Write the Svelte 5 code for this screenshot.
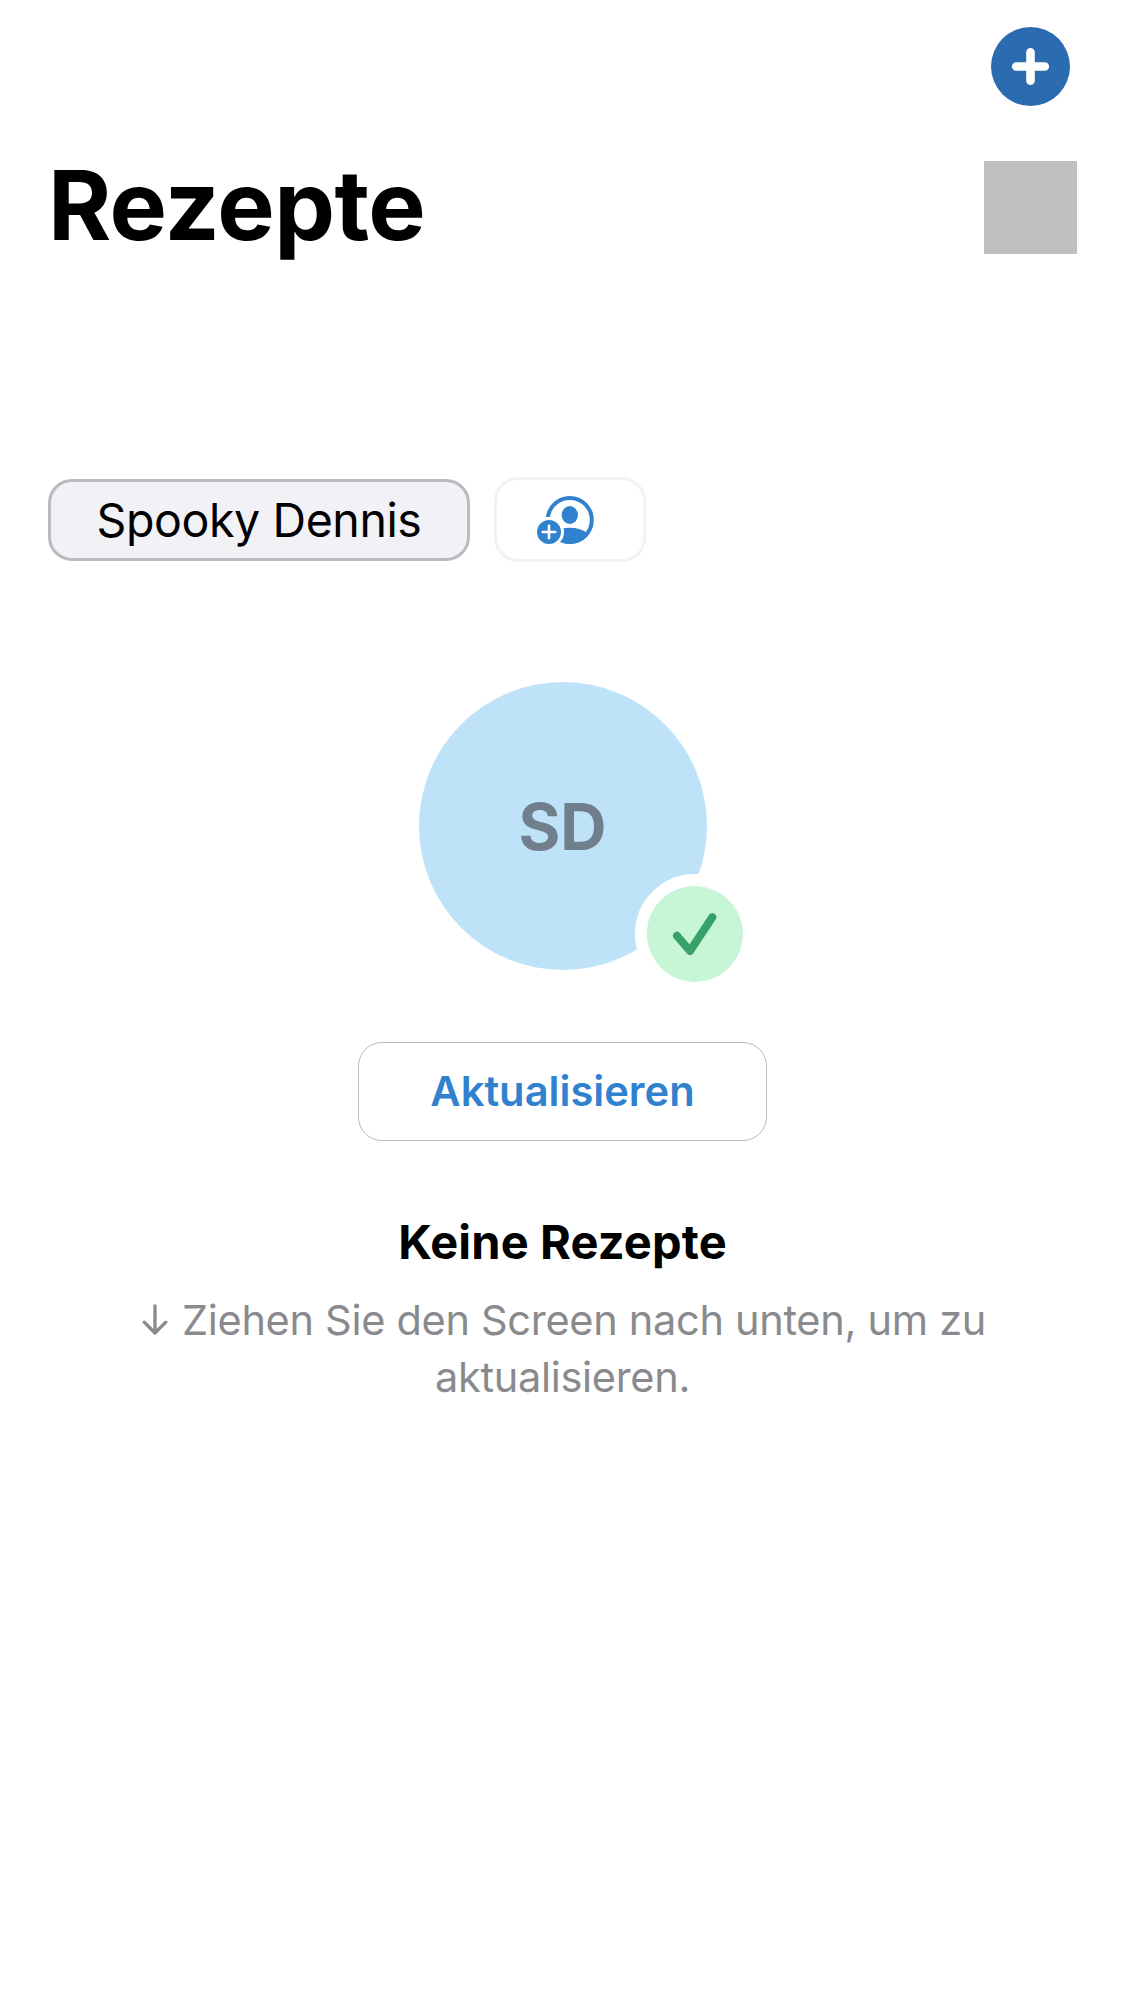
<script>
  const title = 'Rezepte';
  const person = { name: 'Spooky Dennis', initials: 'SD' };
</script>

<main class="screen">
  <header>
    <div class="toolbar">
      <button class="add" aria-label="Rezept hinzufügen">
        <svg viewBox="0 0 79 79" width="79" height="79">
          <path d="M39.5 25.2v28.6M25.2 39.5h28.6" stroke="#fff" stroke-width="8.6" stroke-linecap="round" />
        </svg>
      </button>
    </div>
    <div class="title-row">
      <h1>{title}</h1>
      <div class="placeholder"></div>
    </div>
  </header>

  <nav class="people">
    <button class="chip selected">{person.name}</button>
    <button class="chip invite" aria-label="Person hinzufügen">
      <svg viewBox="0 0 58 50" width="58" height="50">
        <defs>
          <mask id="badge-gap">
            <rect width="58" height="50" fill="#fff" />
            <circle cx="13" cy="37" r="15" fill="#000" />
            <path d="M6 22h7v4h-7z" fill="#000" />
          </mask>
          <clipPath id="ring-clip"><circle cx="33.8" cy="25" r="24" /></clipPath>
        </defs>
        <g mask="url(#badge-gap)">
          <circle cx="33.8" cy="25" r="22" fill="none" stroke="#3182ce" stroke-width="4" />
          <ellipse cx="33.8" cy="20" rx="8.2" ry="9" fill="#3182ce" />
          <ellipse cx="33.8" cy="49.7" rx="24" ry="17" fill="#3182ce" clip-path="url(#ring-clip)" />
        </g>
        <circle cx="13" cy="37" r="12" fill="#3182ce" />
        <path d="M13 30.7v12.6M6.7 37h12.6" stroke="#fff" stroke-width="2.6" stroke-linecap="round" />
      </svg>
    </button>
  </nav>

  <section class="empty">
    <div class="avatar">
      <span>{person.initials}</span>
      <div class="status">
        <svg viewBox="0 0 96 96" width="96" height="96">
          <path d="M30 49.8L43 65L65.3 31.2" fill="none" stroke="#38a169" stroke-width="8" stroke-linecap="round" stroke-linejoin="round" />
        </svg>
      </div>
    </div>
    <button class="refresh">Aktualisieren</button>
    <h2>Keine Rezepte</h2>
    <p>
      <svg class="arrow" viewBox="0 0 26 31" width="26" height="31"><path d="M13 2v27M2.2 18.2L13 29L23.8 18.2" fill="none" stroke="#8a8a8e" stroke-width="3.3" stroke-linecap="round" stroke-linejoin="round" /></svg>Ziehen Sie den Screen nach unten, um zu aktualisieren.
    </p>
  </section>
</main>

<style>
  :global(body) {
    margin: 0;
    background: #fff;
  }
  .screen {
    box-sizing: border-box;
    min-height: 2001px;
    padding: 27px 48px 0;
    font-family: Inter, 'Liberation Sans', sans-serif;
    color: #000;
  }
  button {
    box-sizing: border-box;
    margin: 0;
    font: inherit;
  }
  svg {
    display: block;
  }
  .toolbar {
    display: flex;
    justify-content: flex-end;
    padding-right: 7px;
  }
  .add {
    width: 79px;
    height: 79px;
    padding: 0;
    border: 0;
    border-radius: 50%;
    background: #2b6cb0;
  }
  .title-row {
    display: flex;
    justify-content: space-between;
    align-items: flex-start;
    margin-top: 55px;
  }
  h1 {
    margin: 0;
    font-size: 96.5px;
    font-weight: 700;
    line-height: 88px;
    letter-spacing: -0.6px;
  }
  .placeholder {
    width: 93px;
    height: 93px;
    background: #bfbfbf;
  }
  .people {
    display: flex;
    align-items: center;
    gap: 24px;
    margin-top: 223px;
  }
  .chip {
    display: flex;
    align-items: center;
    justify-content: center;
    border: 3px solid #f2f1f6;
    border-radius: 24px;
    background: #fff;
    color: #000;
  }
  .selected {
    width: 422px;
    height: 82px;
    padding: 0;
    border-color: #bbbac0;
    background: #f2f1f6;
    font-size: 46.5px;
    line-height: 76px;
    letter-spacing: -0.4px;
  }
  .invite {
    width: 152px;
    height: 85px;
    padding: 0 10px 0 0;
  }
  .empty {
    display: flex;
    flex-direction: column;
    align-items: center;
    margin-top: 120px;
  }
  .avatar {
    position: relative;
    display: flex;
    align-items: center;
    justify-content: center;
    width: 288px;
    height: 288px;
    border-radius: 50%;
    background: #bee3f8;
    color: #717e8c;
    font-size: 64px;
    font-weight: 700;
  }
  .status {
    position: absolute;
    right: -48px;
    bottom: -24px;
    border: 12px solid #fff;
    border-radius: 50%;
    background: #c6f6d5;
    background-clip: padding-box;
  }
  .refresh {
    width: 409px;
    height: 99px;
    margin-top: 72px;
    padding: 0;
    border: 1px solid #b9b9bb;
    border-radius: 24px;
    background: #fff;
    color: #3182ce;
    font-size: 41.7px;
    font-weight: 600;
    line-height: 97px;
  }
  h2 {
    margin: 73px 0 0;
    font-size: 47px;
    font-weight: 700;
    line-height: 56px;
    letter-spacing: 0.15px;
  }
  p {
    width: 880px;
    margin: 22px 0 0;
    color: #8a8a8e;
    font-size: 41.5px;
    line-height: 57px;
    letter-spacing: -0.3px;
    text-align: center;
  }
  .arrow {
    display: inline-block;
    margin: 0 14px 0 3px;
    vertical-align: baseline;
  }
</style>
